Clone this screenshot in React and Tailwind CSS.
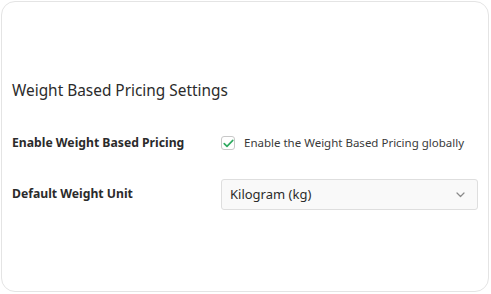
export default function App() {
  return (
    <div className="w-[491px] h-[294px] bg-white p-px" style={{ fontFamily: '"Noto Sans", "Open Sans", sans-serif' }}>
      <div className="w-[488px] h-[291px] border border-[#e4e4e4] rounded-[14px] pl-[10px] pr-[10px] pt-[79px]">
        <h2 className="text-[15.4px] leading-[20px] text-[#2b2b2b] font-normal">Weight Based Pricing Settings</h2>
        <div className="mt-[32px] flex items-center h-[20px]">
          <div className="w-[209px] text-[12.2px] font-bold text-[#2b2b2b]">Enable Weight Based Pricing</div>
          <label className="flex items-center gap-[9px]">
            <span className="w-[14px] h-[14px] border border-[#c8c8c8] rounded-[3px] flex items-center justify-center bg-white">
              <svg width="11" height="9" viewBox="0 0 11 9" fill="none">
                <path d="M1.2 4.6 L4 7.4 L9.8 1.4" stroke="#2faa60" strokeWidth="1.6" strokeLinecap="round" strokeLinejoin="round" />
              </svg>
            </span>
            <span className="text-[11.5px] text-[#3a3a3a]">Enable the Weight Based Pricing globally</span>
          </label>
        </div>
        <div className="mt-[26px] flex items-center">
          <div className="w-[209px] text-[12.2px] font-bold text-[#2b2b2b]">Default Weight Unit</div>
          <div className="w-[257px] h-[31px] border border-[#dedede] rounded-[3px] bg-[#f9f9f9] flex items-center justify-between pl-[8px] pr-[12px]">
            <span className="text-[13px] text-[#2b2b2b]">Kilogram (kg)</span>
            <svg width="9" height="6" viewBox="0 0 9 6" fill="none">
              <path d="M1 1 L4.5 4.5 L8 1" stroke="#8a8a8a" strokeWidth="1.2" strokeLinecap="round" strokeLinejoin="round" />
            </svg>
          </div>
        </div>
      </div>
    </div>
  );
}
